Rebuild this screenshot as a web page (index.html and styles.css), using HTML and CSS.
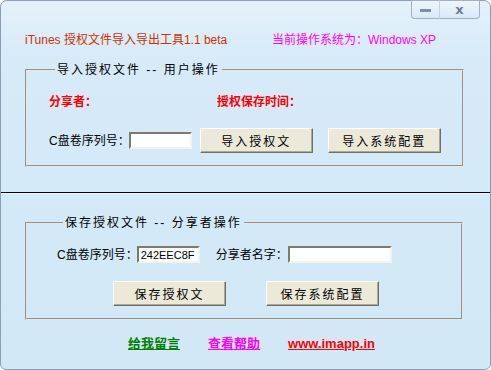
FILE: index.html
```html
<!DOCTYPE html>
<html lang="zh-CN">
<head>
  <meta charset="UTF-8">
  <title>iTunes 授权文件导入导出工具</title>
  <link rel="stylesheet" href="styles.css">
</head>
<body>

  <div class="window">
    <div class="titlebar">
      <button class="caption-btn min" type="button" title="最小化"><span class="min-bar"></span></button>
      <button class="caption-btn close" type="button" title="关闭">x</button>
    </div>

    <div class="header">
      <span class="app-name">iTunes 授权文件导入导出工具1.1 beta</span>
      <span class="os-name">当前操作系统为：Windows XP</span>
    </div>

    <fieldset class="group group-import">
      <legend>导入授权文件 -- 用户操作</legend>
      <div class="info-row">
        <span class="info sharer">分享者：</span>
        <span class="info">授权保存时间：</span>
      </div>
      <div class="action-row">
        <label for="serial_in" class="field-label">C盘卷序列号：</label>
        <input type="text" id="serial_in" class="serial">
        <button type="button" class="btn btn-first">导入授权文</button>
        <button type="button" class="btn btn-second">导入系统配置</button>
      </div>
    </fieldset>

    <div class="separator"></div>

    <fieldset class="group group-save">
      <legend>保存授权文件 -- 分享者操作</legend>
      <div class="field-row">
        <label for="serial_out" class="field-label">C盘卷序列号：</label>
        <input type="text" id="serial_out" class="serial" value="242EEC8F">
        <label for="sharer_name" class="field-label name-label">分享者名字：</label>
        <input type="text" id="sharer_name" class="name-input">
      </div>
      <div class="save-row">
        <button type="button" class="btn">保存授权文</button>
        <button type="button" class="btn btn-save2">保存系统配置</button>
      </div>
    </fieldset>

    <div class="links">
      <a href="#" class="link green">给我留言</a>
      <a href="#" class="link pink">查看帮助</a>
      <a href="#" class="link red">www.imapp.in</a>
    </div>
  </div>

</body>
</html>
```

FILE: styles.css
```css
body {
  margin: 0;
  background-color: #ffffff;
  font-family: "Liberation Sans", "Noto Sans CJK SC", sans-serif;
  font-size: 12px;
  color: #000;
}
.window {
  width: 491px;
  height: 370px;
  box-sizing: border-box;
  border: 1px solid #8a9fb5;
  border-radius: 7px 7px 6px 6px;
  background: linear-gradient(#e4f1fa, #d6eaf8 60px, #d2e8f7);
  display: flex;
  flex-direction: column;
}
.titlebar {
  display: flex;
  justify-content: flex-end;
  height: 19px;
  padding-right: 10px;
}
.caption-btn {
  height: 19px;
  margin: -1px 0 0 0;
  padding: 0;
  border: 1px solid #9fb1c3;
  background: linear-gradient(#eef5fb, #dbe9f5);
  color: #6d7f92;
  font-family: "DejaVu Sans", sans-serif;
  font-size: 13px;
  font-weight: bold;
  line-height: 15px;
}
.min {
  width: 29px;
  border-radius: 0 0 0 4px;
  border-right: 1px solid #c4d3e1;
}
.min-bar {
  display: inline-block;
  width: 11px;
  height: 3px;
  background-color: #7d8fa2;
  vertical-align: middle;
}
.close {
  width: 40px;
  border-left: none;
  border-radius: 0 0 4px 0;
}
.header {
  display: flex;
  margin-top: 13px;
  padding-left: 24px;
  line-height: 14px;
  font-size: 12px;
}
.app-name {
  color: #cc3300;
  width: 247px;
}
.os-name {
  color: #ff00ff;
}
.group {
  margin: 16px 0 0 24px;
  padding: 0;
  border: 2px groove #e6e6e6;
  min-width: 0;
}
.group-import {
  width: 439px;
  box-sizing: border-box;
  padding: 18px 0 12px 22px;
}
.group-save {
  width: 438px;
  box-sizing: border-box;
  margin-top: 22px;
  padding: 16px 0 12px 30px;
}
legend {
  margin-left: 6px;
  padding: 0 2px;
  line-height: 14px;
  letter-spacing: 2px;
  font-size: 12px;
}
.info-row {
  display: flex;
  line-height: 14px;
}
.info {
  color: #ff0000;
  font-weight: bold;
}
.sharer {
  width: 168px;
}
.action-row {
  display: flex;
  align-items: center;
  margin-top: 19px;
  height: 25px;
}
.field-label {
  line-height: 14px;
}
.serial {
  width: 63px;
  margin-left: -1px;
}
input {
  height: 17px;
  box-sizing: border-box;
  padding: 0 2px;
  border: 2px solid;
  border-color: #7b7c6c #f4f3ee #f4f3ee #7b7c6c;
  background-color: #ffffff;
  font-family: "Liberation Sans", sans-serif;
  font-size: 11px;
  outline: none;
}
.btn {
  width: 113px;
  height: 25px;
  padding: 0;
  background-color: #ece9d8;
  border: 1px solid;
  border-color: #ffffff #716f64 #716f64 #ffffff;
  box-shadow: inset -1px -1px #aca899;
  font-family: "Liberation Sans", "Noto Sans CJK SC", sans-serif;
  font-size: 12px;
  letter-spacing: 2px;
  color: #000;
}
.btn-first {
  margin-left: 8px;
}
.btn-second {
  margin-left: 15px;
}
.separator {
  margin-top: 25px;
  border-top: 1px solid #000;
  border-bottom: 1px solid #e8f3fb;
}
.field-row {
  display: flex;
  align-items: center;
  height: 17px;
}
.name-label {
  margin-left: 16px;
}
.name-input {
  width: 104px;
}
.save-row {
  display: flex;
  margin-top: 18px;
  padding-left: 56px;
}
.btn-save2 {
  margin-left: 40px;
}
.links {
  display: flex;
  margin-top: 16px;
  padding-left: 127px;
  line-height: 16px;
}
.link {
  font-size: 13px;
  font-weight: bold;
  text-decoration: underline;
  margin-right: 28px;
}
.green {
  color: #008000;
}
.pink {
  color: #ff00ff;
}
.red {
  color: #ff0000;
}
```
